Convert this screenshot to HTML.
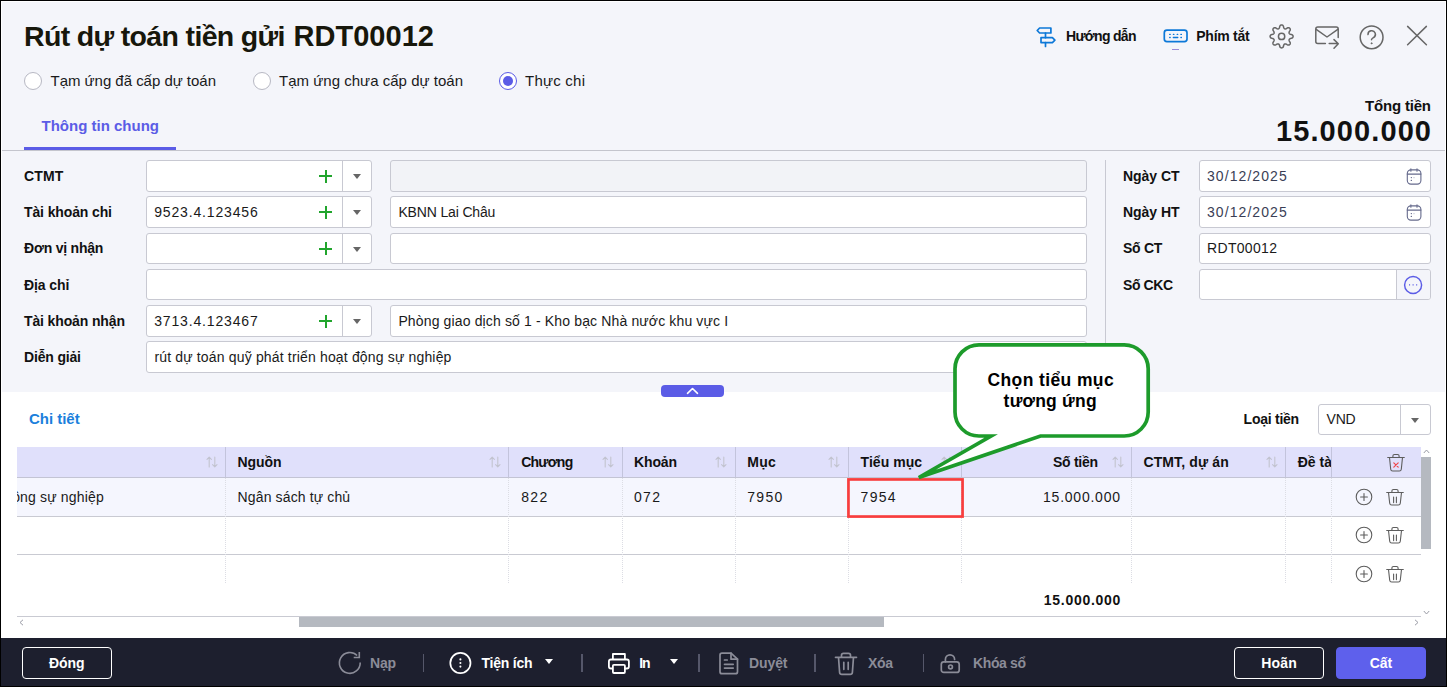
<!DOCTYPE html>
<html lang="vi">
<head>
<meta charset="utf-8">
<title>Rút dự toán tiền gửi RDT00012</title>
<style>
*{box-sizing:border-box;margin:0;padding:0}
html,body{width:1447px;height:687px;overflow:hidden;background:#f4f5fa}
body{font-family:"Liberation Sans",sans-serif;color:#111;position:relative;font-size:14px}
.a{position:absolute}
.t{position:absolute;white-space:nowrap;line-height:1em}
svg{position:absolute;overflow:visible}
#frame{position:absolute;left:0;top:0;width:1447px;height:687px;border:1px solid #000;z-index:50;pointer-events:none}
#frame2{position:absolute;left:1px;top:1px;width:1445px;height:637px;border:1px solid #fff;border-bottom:0;z-index:49;pointer-events:none}
.inp{position:absolute;background:#fff;border:1px solid #c8c9d2;border-radius:3px}
.dis{background:#f2f3f7}
.sep{position:absolute;width:1px;background:#c8c9d2}
.pl{position:absolute;width:13px;height:13px}
.pl:before{content:"";position:absolute;left:0;top:5.5px;width:13px;height:2px;background:#21a52d}
.pl:after{content:"";position:absolute;left:5.5px;top:0;width:2px;height:13px;background:#21a52d}
.car{position:absolute;width:0;height:0;border-left:4.5px solid transparent;border-right:4.5px solid transparent;border-top:5.5px solid #666}
.vl{position:absolute;width:0;border-left:1px dotted #dcdde4}
.hl{position:absolute;height:1px;background:#c9cad2}
.fsep{position:absolute;top:654px;width:1.5px;height:18px;background:#55576a}
</style>
</head>
<body>
<div id="frame"></div><div id="frame2"></div>

<div class="t" id="t1" style="top:22.17px;font-size:28.5px;color:#17170b;font-weight:bold;letter-spacing:-0.658px;left:24px;">Rút dự toán tiền gửi</div>
<div class="t" id="t2" style="top:21.75px;font-size:29px;color:#17170b;font-weight:bold;letter-spacing:0.036px;left:293.5px;">RDT00012</div>
<div class="t" id="t3" style="top:29.35px;font-size:14px;color:#111;font-weight:bold;letter-spacing:-0.699px;left:1066px;">Hướng dẫn</div>
<div class="a" style="left:1172px;top:49px;width:7px;height:1px;background:#9a8ad6"></div>
<div class="t" id="t4" style="top:29.35px;font-size:14px;color:#111;font-weight:bold;letter-spacing:-0.262px;left:1196.3px;">Phím tắt</div>
<div class="a" style="left:24px;top:72px;width:18px;height:18px;border-radius:50%;border:1px solid #b7b8c3;background:#fff"></div>
<div class="t" id="t5" style="top:72.70px;font-size:15px;color:#1a1a1a;letter-spacing:-0.025px;left:50.5px;">Tạm ứng đã cấp dự toán</div>
<div class="a" style="left:253px;top:72px;width:18px;height:18px;border-radius:50%;border:1px solid #b7b8c3;background:#fff"></div>
<div class="t" id="t6" style="top:72.70px;font-size:15px;color:#1a1a1a;letter-spacing:0.019px;left:279px;">Tạm ứng chưa cấp dự toán</div>
<div class="a" style="left:499px;top:72px;width:18px;height:18px;border-radius:50%;border:1px solid #5b5ce6;background:#fff"></div><div class="a" style="left:503px;top:76px;width:10px;height:10px;border-radius:50%;background:#5b5ce6"></div>
<div class="t" id="t7" style="top:72.70px;font-size:15px;color:#1a1a1a;letter-spacing:0.230px;left:525px;">Thực chi</div>
<div class="t" id="t8" style="top:117.60px;font-size:15px;color:#5b5ce6;font-weight:bold;letter-spacing:0.002px;left:41.5px;">Thông tin chung</div>
<div class="a" style="left:24px;top:147px;width:152px;height:3px;background:#5b5ce6"></div>
<div class="a" style="left:2px;top:150px;width:1443px;height:1px;background:#c4c5cd"></div>
<div class="t" id="t9" style="top:98.30px;font-size:15px;color:#111;font-weight:bold;letter-spacing:-0.188px;right:16.19px;">Tổng tiền</div>
<div class="t" id="t10" style="top:117.45px;font-size:29px;color:#111;font-weight:bold;letter-spacing:1.094px;right:14.91px;">15.000.000</div>
<div class="t" id="t11" style="top:169.15px;font-size:14px;color:#111;font-weight:bold;letter-spacing:0.136px;left:24px;">CTMT</div>
<div class="t" id="t12" style="top:205.45px;font-size:14px;color:#111;font-weight:bold;letter-spacing:-0.122px;left:24px;">Tài khoản chi</div>
<div class="t" id="t13" style="top:241.15px;font-size:14px;color:#111;font-weight:bold;letter-spacing:-0.212px;left:24px;">Đơn vị nhận</div>
<div class="t" id="t14" style="top:278.15px;font-size:14px;color:#111;font-weight:bold;letter-spacing:-0.101px;left:24px;">Địa chỉ</div>
<div class="t" id="t15" style="top:314.15px;font-size:14px;color:#111;font-weight:bold;letter-spacing:-0.130px;left:24px;">Tài khoản nhận</div>
<div class="t" id="t16" style="top:350.45px;font-size:14px;color:#111;font-weight:bold;letter-spacing:-0.170px;left:24px;">Diễn giải</div>
<div class="inp" style="left:146px;top:160px;width:226px;height:31.5px"></div>
<div class="sep" style="left:342px;top:161px;height:29.5px"></div>
<div class="pl" style="left:319px;top:169.5px"></div>
<div class="car" style="left:352.5px;top:174px"></div>
<div class="inp dis" style="left:390px;top:160px;width:697px;height:31.5px"></div>
<div class="inp" style="left:146px;top:196.25px;width:226px;height:31.5px"></div>
<div class="sep" style="left:342px;top:197.25px;height:29.5px"></div>
<div class="pl" style="left:319px;top:205.75px"></div>
<div class="car" style="left:352.5px;top:210.25px"></div>
<div class="t" id="t17" style="top:205.45px;font-size:14px;color:#1a1a1a;letter-spacing:0.839px;left:154.2px;">9523.4.123456</div>
<div class="inp" style="left:390px;top:196.25px;width:697px;height:31.5px"></div>
<div class="t" id="t18" style="top:205.45px;font-size:14px;color:#1a1a1a;letter-spacing:-0.152px;left:398.4px;">KBNN Lai Châu</div>
<div class="inp" style="left:146px;top:232.5px;width:226px;height:31.5px"></div>
<div class="sep" style="left:342px;top:233.5px;height:29.5px"></div>
<div class="pl" style="left:319px;top:242.0px"></div>
<div class="car" style="left:352.5px;top:246.5px"></div>
<div class="inp" style="left:390px;top:232.5px;width:697px;height:31.5px"></div>
<div class="inp" style="left:146px;top:268.75px;width:941px;height:31.5px"></div>
<div class="inp" style="left:146px;top:305px;width:226px;height:31.5px"></div>
<div class="sep" style="left:342px;top:306px;height:29.5px"></div>
<div class="pl" style="left:319px;top:314.5px"></div>
<div class="car" style="left:352.5px;top:319px"></div>
<div class="t" id="t19" style="top:314.15px;font-size:14px;color:#1a1a1a;letter-spacing:0.839px;left:154.2px;">3713.4.123467</div>
<div class="inp" style="left:390px;top:305px;width:697px;height:31.5px"></div>
<div class="t" id="t20" style="top:314.15px;font-size:14px;color:#1a1a1a;letter-spacing:0.142px;left:398.4px;">Phòng giao dịch số 1 - Kho bạc Nhà nước khu vực I</div>
<div class="inp" style="left:146px;top:341.25px;width:941px;height:31.5px"></div>
<div class="t" id="t21" style="top:350.45px;font-size:14px;color:#1a1a1a;letter-spacing:0.164px;left:154.4px;">rút dự toán quỹ phát triển hoạt động sự nghiệp</div>
<div class="a" style="left:1105px;top:160px;width:1px;height:213px;background:#c8c9d2"></div>
<div class="t" id="t22" style="top:169.15px;font-size:14px;color:#111;font-weight:bold;letter-spacing:-0.049px;left:1123px;">Ngày CT</div>
<div class="inp" style="left:1199px;top:160px;width:232px;height:31.5px"></div>
<div class="t" id="t23" style="top:205.45px;font-size:14px;color:#111;font-weight:bold;letter-spacing:-0.049px;left:1123px;">Ngày HT</div>
<div class="inp" style="left:1199px;top:196.25px;width:232px;height:31.5px"></div>
<div class="t" id="t24" style="top:241.15px;font-size:14px;color:#111;font-weight:bold;letter-spacing:-0.288px;left:1123px;">Số CT</div>
<div class="inp" style="left:1199px;top:232.5px;width:232px;height:31.5px"></div>
<div class="t" id="t25" style="top:278.15px;font-size:14px;color:#111;font-weight:bold;letter-spacing:-0.425px;left:1123px;">Số CKC</div>
<div class="inp" style="left:1199px;top:268.75px;width:232px;height:31.5px"></div>
<div class="t" id="t26" style="top:169.15px;font-size:14px;color:#3a3e55;letter-spacing:1.069px;left:1207px;">30/12/2025</div>
<svg style="left:1406px;top:167.8px" width="16" height="17" viewBox="0 0 16 17" fill="none" stroke="#656a8c" stroke-width="1.1" stroke-linecap="round"><rect x="1.3" y="1.900" width="13.6" height="14.2" rx="3.6"/><path d="M1.3 6.1H14.9M4.9 .8V3.300M11 .8V3.3" /><path d="M5.300 9.600H5.4M5.3 12.4H5.400" stroke-width="1.300"/><path d="M7.900 9.7H8.1" stroke-width="1" stroke="#a9acc2"/></svg>
<div class="t" id="t27" style="top:205.45px;font-size:14px;color:#3a3e55;letter-spacing:1.069px;left:1207px;">30/12/2025</div>
<svg style="left:1406px;top:204.05px" width="16" height="17" viewBox="0 0 16 17" fill="none" stroke="#656a8c" stroke-width="1.1" stroke-linecap="round"><rect x="1.3" y="1.900" width="13.6" height="14.2" rx="3.6"/><path d="M1.3 6.1H14.9M4.9 .8V3.300M11 .8V3.3" /><path d="M5.300 9.600H5.4M5.3 12.4H5.400" stroke-width="1.300"/><path d="M7.900 9.7H8.1" stroke-width="1" stroke="#a9acc2"/></svg>
<div class="t" id="t28" style="top:241.15px;font-size:14px;color:#1a1a1a;letter-spacing:0.328px;left:1207px;">RDT00012</div>
<div class="a" style="left:1397px;top:269.75px;width:33px;height:29.5px;background:#f4f5fa;border-radius:0 2px 2px 0"></div>
<div class="sep" style="left:1396px;top:269.75px;height:29.5px"></div>
<div class="a" style="left:2px;top:391.6px;width:1443px;height:246.4px;background:#fff"></div>
<div class="a" style="left:661px;top:385px;width:63px;height:12px;background:#5b5ce6;border-radius:4px"></div>
<svg style="left:686px;top:387px" width="13" height="8" viewBox="0 0 13 8" fill="none" stroke="#fff" stroke-width="1.6" stroke-linecap="round" stroke-linejoin="round"><path d="M1.5 6.3L6.5 1.5L11.5 6.3"/></svg>
<div class="t" id="t29" style="top:410.70px;font-size:15px;color:#1b7fdc;font-weight:bold;letter-spacing:-0.021px;left:29px;">Chi tiết</div>
<div class="t" id="t30" style="top:411.95px;font-size:14px;color:#111;font-weight:bold;letter-spacing:-0.258px;left:1243.6px;">Loại tiền</div>
<div class="inp" style="left:1318px;top:404px;width:113px;height:31px"></div>
<div class="sep" style="left:1400px;top:405px;height:29px"></div>
<div class="car" style="left:1410.5px;top:418px"></div>
<div class="t" id="t31" style="top:411.95px;font-size:14px;color:#1a1a1a;letter-spacing:-0.281px;left:1326.6px;">VND</div>
<div class="a" style="left:17px;top:447px;width:1404px;height:30.5px;background:#e0e0fb"></div>
<div class="a" style="left:17px;top:478px;width:1404px;height:38px;background:#f5f6fe"></div>
<div class="hl" style="left:17px;top:477px;width:1404px;background:#c3c4d4"></div>
<div class="hl" style="left:17px;top:516px;width:1404px"></div>
<div class="hl" style="left:17px;top:554px;width:1404px"></div>
<div class="hl" style="left:17px;top:616px;width:1404px"></div>
<div class="a" style="left:225px;top:447px;width:1px;height:30px;background:#c3c4dc"></div>
<div class="vl" style="left:225px;top:478px;height:105px"></div>
<div class="a" style="left:508px;top:447px;width:1px;height:30px;background:#c3c4dc"></div>
<div class="vl" style="left:508px;top:478px;height:105px"></div>
<div class="a" style="left:622px;top:447px;width:1px;height:30px;background:#c3c4dc"></div>
<div class="vl" style="left:622px;top:478px;height:105px"></div>
<div class="a" style="left:735px;top:447px;width:1px;height:30px;background:#c3c4dc"></div>
<div class="vl" style="left:735px;top:478px;height:105px"></div>
<div class="a" style="left:848px;top:447px;width:1px;height:30px;background:#c3c4dc"></div>
<div class="vl" style="left:848px;top:478px;height:105px"></div>
<div class="a" style="left:961px;top:447px;width:1px;height:30px;background:#c3c4dc"></div>
<div class="vl" style="left:961px;top:478px;height:105px"></div>
<div class="a" style="left:1131px;top:447px;width:1px;height:30px;background:#c3c4dc"></div>
<div class="vl" style="left:1131px;top:478px;height:105px"></div>
<div class="a" style="left:1285px;top:447px;width:1px;height:30px;background:#c3c4dc"></div>
<div class="vl" style="left:1285px;top:478px;height:105px"></div>
<div class="a" style="left:1331px;top:447px;width:1px;height:30px;background:#c3c4dc"></div>
<div class="vl" style="left:1331px;top:478px;height:105px"></div>
<svg style="left:205.5px;top:456px" width="12" height="12" viewBox="0 0 12 12" fill="none" stroke="#c2c3cf" stroke-width="1.1" stroke-linecap="round" stroke-linejoin="round"><path d="M3.2 11V1.2M1 3.4L3.2 1.2L5.4 3.4M8.8 1V10.8M6.6 8.6L8.8 10.8L11 8.6"/></svg>
<svg style="left:488.5px;top:456px" width="12" height="12" viewBox="0 0 12 12" fill="none" stroke="#c2c3cf" stroke-width="1.1" stroke-linecap="round" stroke-linejoin="round"><path d="M3.2 11V1.2M1 3.4L3.2 1.2L5.4 3.4M8.8 1V10.8M6.6 8.6L8.8 10.8L11 8.6"/></svg>
<svg style="left:601.5px;top:456px" width="12" height="12" viewBox="0 0 12 12" fill="none" stroke="#c2c3cf" stroke-width="1.1" stroke-linecap="round" stroke-linejoin="round"><path d="M3.2 11V1.2M1 3.4L3.2 1.2L5.4 3.4M8.8 1V10.8M6.6 8.6L8.8 10.8L11 8.6"/></svg>
<svg style="left:714.5px;top:456px" width="12" height="12" viewBox="0 0 12 12" fill="none" stroke="#c2c3cf" stroke-width="1.1" stroke-linecap="round" stroke-linejoin="round"><path d="M3.2 11V1.2M1 3.4L3.2 1.2L5.4 3.4M8.8 1V10.8M6.6 8.6L8.8 10.8L11 8.6"/></svg>
<svg style="left:828px;top:456px" width="12" height="12" viewBox="0 0 12 12" fill="none" stroke="#c2c3cf" stroke-width="1.1" stroke-linecap="round" stroke-linejoin="round"><path d="M3.2 11V1.2M1 3.4L3.2 1.2L5.4 3.4M8.8 1V10.8M6.6 8.6L8.8 10.8L11 8.6"/></svg>
<svg style="left:941px;top:456px" width="12" height="12" viewBox="0 0 12 12" fill="none" stroke="#c2c3cf" stroke-width="1.1" stroke-linecap="round" stroke-linejoin="round"><path d="M3.2 11V1.2M1 3.4L3.2 1.2L5.4 3.4M8.8 1V10.8M6.6 8.6L8.8 10.8L11 8.6"/></svg>
<svg style="left:1111.7px;top:456px" width="12" height="12" viewBox="0 0 12 12" fill="none" stroke="#c2c3cf" stroke-width="1.1" stroke-linecap="round" stroke-linejoin="round"><path d="M3.2 11V1.2M1 3.4L3.2 1.2L5.4 3.4M8.8 1V10.8M6.6 8.6L8.8 10.8L11 8.6"/></svg>
<svg style="left:1265.5px;top:456px" width="12" height="12" viewBox="0 0 12 12" fill="none" stroke="#c2c3cf" stroke-width="1.1" stroke-linecap="round" stroke-linejoin="round"><path d="M3.2 11V1.2M1 3.4L3.2 1.2L5.4 3.4M8.8 1V10.8M6.6 8.6L8.8 10.8L11 8.6"/></svg>
<div class="t" id="t32" style="top:455.15px;font-size:14px;color:#111;font-weight:bold;letter-spacing:-0.082px;left:237.6px;">Nguồn</div>
<div class="t" id="t33" style="top:455.15px;font-size:14px;color:#111;font-weight:bold;letter-spacing:-0.772px;left:521.2px;">Chương</div>
<div class="t" id="t34" style="top:455.15px;font-size:14px;color:#111;font-weight:bold;letter-spacing:-0.141px;left:634px;">Khoản</div>
<div class="t" id="t35" style="top:455.15px;font-size:14px;color:#111;font-weight:bold;letter-spacing:0.250px;left:747.3px;">Mục</div>
<div class="t" id="t36" style="top:455.15px;font-size:14px;color:#111;font-weight:bold;letter-spacing:0.042px;left:860.6px;">Tiểu mục</div>
<div class="t" id="t37" style="top:455.15px;font-size:14px;color:#111;font-weight:bold;letter-spacing:-0.279px;right:349.28px;">Số tiền</div>
<div class="t" id="t38" style="top:455.15px;font-size:14px;color:#111;font-weight:bold;letter-spacing:0.127px;left:1143.4px;">CTMT, dự án</div>
<div class="a" style="left:1297px;top:450px;width:34px;height:26px;overflow:hidden"><div class="t" id="t39" style="top:5.15px;font-size:14px;color:#111;font-weight:bold;left:0.7px;">Đề tài</div></div>
<div class="a" style="left:17px;top:480px;width:100px;height:34px;overflow:hidden"><div class="t" id="t40" style="top:9.65px;font-size:14px;color:#1a1a1a;letter-spacing:0.168px;left:-44.8px;">hoạt động sự nghiệp</div></div>
<div class="t" id="t41" style="top:489.65px;font-size:14px;color:#1a1a1a;letter-spacing:0.130px;left:237.6px;">Ngân sách tự chủ</div>
<div class="t" id="t42" style="top:489.65px;font-size:14px;color:#1a1a1a;letter-spacing:1.320px;left:521.2px;">822</div>
<div class="t" id="t43" style="top:489.65px;font-size:14px;color:#1a1a1a;letter-spacing:1.320px;left:634px;">072</div>
<div class="t" id="t44" style="top:489.65px;font-size:14px;color:#1a1a1a;letter-spacing:1.281px;left:747.3px;">7950</div>
<div class="t" id="t45" style="top:489.65px;font-size:14px;color:#1a1a1a;letter-spacing:1.281px;left:860.6px;">7954</div>
<div class="t" id="t46" style="top:489.65px;font-size:14px;color:#1a1a1a;letter-spacing:0.769px;right:326.23px;">15.000.000</div>
<svg style="left:1355px;top:488.2px" width="18" height="18" viewBox="0 0 18 18" fill="none" stroke="#5d5d5d" stroke-width="1.1" stroke-linecap="round"><circle cx="9" cy="9" r="7.8"/><path d="M9 5.6V12.4M5.6 9H12.4"/></svg>
<svg style="left:1386.2px;top:488.0px" width="18" height="19" viewBox="0 0 18 19" fill="none" stroke="#5d5d5d" stroke-width="1.1" stroke-linecap="round" stroke-linejoin="round"><path d="M.7 4.5H17.3M5.9 4.5V3Q5.9 1.5 7.4 1.5H10.6Q12.100 1.5 12.1 3V4.500M2.5 4.5L3.7 15.2Q3.900 17 5.7 17H12.3Q14.1 17 14.3 15.2L15.5 4.5"/><path d="M7.6 9V14.6M10.4 9V14.6"/></svg>
<svg style="left:1355px;top:526.2px" width="18" height="18" viewBox="0 0 18 18" fill="none" stroke="#5d5d5d" stroke-width="1.1" stroke-linecap="round"><circle cx="9" cy="9" r="7.8"/><path d="M9 5.6V12.4M5.6 9H12.4"/></svg>
<svg style="left:1386.2px;top:526.0px" width="18" height="19" viewBox="0 0 18 19" fill="none" stroke="#5d5d5d" stroke-width="1.1" stroke-linecap="round" stroke-linejoin="round"><path d="M.7 4.5H17.3M5.9 4.5V3Q5.9 1.5 7.4 1.5H10.6Q12.100 1.5 12.1 3V4.500M2.5 4.5L3.7 15.2Q3.900 17 5.7 17H12.3Q14.1 17 14.3 15.2L15.5 4.5"/><path d="M7.6 9V14.6M10.4 9V14.6"/></svg>
<svg style="left:1355px;top:565px" width="18" height="18" viewBox="0 0 18 18" fill="none" stroke="#5d5d5d" stroke-width="1.1" stroke-linecap="round"><circle cx="9" cy="9" r="7.8"/><path d="M9 5.6V12.4M5.6 9H12.4"/></svg>
<svg style="left:1386.2px;top:564.8px" width="18" height="19" viewBox="0 0 18 19" fill="none" stroke="#5d5d5d" stroke-width="1.1" stroke-linecap="round" stroke-linejoin="round"><path d="M.7 4.5H17.3M5.9 4.5V3Q5.9 1.5 7.4 1.5H10.6Q12.100 1.5 12.1 3V4.500M2.5 4.5L3.7 15.2Q3.900 17 5.7 17H12.3Q14.1 17 14.3 15.2L15.5 4.5"/><path d="M7.6 9V14.6M10.4 9V14.6"/></svg>
<svg style="left:1387.2px;top:452.5px" width="18" height="19" viewBox="0 0 18 19" fill="none" stroke="#5d5d5d" stroke-width="1.1" stroke-linecap="round" stroke-linejoin="round"><path d="M.7 4.5H17.3M5.9 4.5V3Q5.9 1.5 7.4 1.5H10.6Q12.100 1.5 12.1 3V4.500M2.5 4.5L3.7 16.2Q3.900 18 5.7 18H12.3Q14.1 18 14.3 16.2L15.5 4.5"/><path d="M6.800 9.8L11.2 14.2M11.2 9.8L6.8 14.2" stroke="#f0474b" stroke-width="1.2"/></svg>
<div class="a" style="left:17px;top:583.5px;width:1404px;height:32.5px;background:#fff"></div>
<div class="t" id="t47" style="top:593.15px;font-size:14px;color:#111;font-weight:bold;letter-spacing:0.725px;right:325.87px;">15.000.000</div>
<div class="a" style="left:1421px;top:447px;width:10px;height:170px;background:#fff"></div>
<div class="a" style="left:1421px;top:457px;width:10px;height:91.5px;background:#b5b9c0"></div>
<svg style="left:1422.5px;top:448.7px" width="7" height="5" viewBox="0 0 7 5" fill="none" stroke="#9a9ca6" stroke-width="1"><path d="M.8 4L3.5 1L6.2 4"/></svg>
<svg style="left:1422.5px;top:609.5px" width="7" height="5" viewBox="0 0 7 5" fill="none" stroke="#9a9ca6" stroke-width="1"><path d="M.8 1L3.5 4L6.2 1"/></svg>
<div class="a" style="left:299px;top:617px;width:585px;height:10px;background:#b5b9c0"></div>
<svg style="left:19px;top:618.5px" width="5" height="7" viewBox="0 0 5 7" fill="none" stroke="#9a9ca6" stroke-width="1"><path d="M4 .8L1 3.5L4 6.2"/></svg>
<svg style="left:1413.5px;top:618.5px" width="5" height="7" viewBox="0 0 5 7" fill="none" stroke="#9a9ca6" stroke-width="1"><path d="M1 .8L4 3.5L1 6.2"/></svg>
<svg style="left:0;top:0" width="1447" height="687" viewBox="0 0 1447 687"><rect x="848.45" y="479.45" width="114.1" height="37.1" fill="none" stroke="#f83d3d" stroke-width="2.7"/><path d="M979 344.8H1124.2A24 24 0 0 1 1148.2 368.8V412A24 24 0 0 1 1124.2 436H1040.5L918.8 477.5L991 436H979A24 24 0 0 1 955 412V368.800A24 24 0 0 1 979 344.8Z" fill="#fff" stroke="#1d9b2b" stroke-width="3.7" stroke-linejoin="miter" stroke-miterlimit="10"/></svg>
<div class="t" id="t48" style="top:372.39px;font-size:17.5px;color:#000;font-weight:bold;letter-spacing:0.381px;left:850.5999999999999px;width:400px;text-align:center;padding-left:0.381px;">Chọn tiểu mục</div>
<div class="t" id="t49" style="top:393.19px;font-size:17.5px;color:#000;font-weight:bold;letter-spacing:0.221px;left:850.0999999999999px;width:400px;text-align:center;padding-left:0.221px;">tương ứng</div>
<div class="a" style="left:0;top:638px;width:1447px;height:49px;background:#1d1f2e"></div>
<div class="a" style="left:22px;top:647px;width:89.5px;height:31.5px;border-radius:4px;border:1px solid #fff;"></div>
<div class="t" id="t50" style="top:656.15px;font-size:14px;color:#fff;font-weight:bold;letter-spacing:-0.089px;left:-133.3px;width:400px;text-align:center;padding-left:-0.089px;">Đóng</div>
<div class="a" style="left:1234px;top:647px;width:90px;height:31.5px;border-radius:4px;border:1px solid #fff;"></div>
<div class="t" id="t51" style="top:656.15px;font-size:14px;color:#fff;font-weight:bold;letter-spacing:0.167px;left:1079px;width:400px;text-align:center;padding-left:0.167px;">Hoãn</div>
<div class="a" style="left:1336px;top:647px;width:90px;height:31.5px;border-radius:4px;background:#5e60ec;border:1px solid #5e60ec;"></div>
<div class="t" id="t52" style="top:656.15px;font-size:14px;color:#fff;font-weight:bold;letter-spacing:-0.031px;left:1181px;width:400px;text-align:center;padding-left:-0.031px;">Cất</div>
<div class="t" id="t53" style="top:656.15px;font-size:14px;color:#8b8c98;font-weight:bold;letter-spacing:-0.227px;left:370px;">Nạp</div>
<div class="t" id="t54" style="top:656.15px;font-size:14px;color:#fff;font-weight:bold;letter-spacing:-0.237px;left:481.5px;">Tiện ích</div>
<div class="car" style="left:544.500px;top:659.4px;border-top-color:#fff"></div>
<div class="t" id="t55" style="top:656.15px;font-size:14px;color:#fff;font-weight:bold;letter-spacing:-0.953px;left:639.2px;">In</div>
<div class="car" style="left:669.500px;top:659.4px;border-top-color:#fff"></div>
<div class="t" id="t56" style="top:656.15px;font-size:14px;color:#8b8c98;font-weight:bold;letter-spacing:-0.102px;left:749px;">Duyệt</div>
<div class="t" id="t57" style="top:656.15px;font-size:14px;color:#8b8c98;font-weight:bold;letter-spacing:-0.344px;left:868px;">Xóa</div>
<div class="t" id="t58" style="top:656.15px;font-size:14px;color:#8b8c98;font-weight:bold;letter-spacing:-0.372px;left:973px;">Khóa sổ</div>
<div class="fsep" style="left:422.8px"></div>
<div class="fsep" style="left:581px"></div>
<div class="fsep" style="left:698px"></div>
<div class="fsep" style="left:814px"></div>
<div class="fsep" style="left:922.5px"></div>
<svg style="left:0;top:0;z-index:40" width="1447" height="687" viewBox="0 0 1447 687"><g fill="none" stroke="#0c78d8" stroke-width="1.7" stroke-linejoin="round" stroke-linecap="round"><path d="M1039.6 28H1050.9V33H1039.6L1037.2 30.5Z"/><path d="M1041 37.7H1052.4L1054.9 40.15L1052.4 42.6H1041Z"/><path d="M1045.5 33V37.7M1045.5 42.6V46.5"/></g>
<g fill="none" stroke="#0c78d8" stroke-width="1.7" stroke-linecap="round"><rect x="1164.3" y="30.05" width="22.7" height="11.6" rx="2.6"/><path d="M1169.7 34.4H1170.2M1173.4 34.4H1173.9M1177.2 34.4H1177.7M1180.9 34.4H1181.4M1169.7 37.5H1170.2M1173.3 37.5H1177.8M1180.9 37.5H1181.4" stroke-width="1.3"/></g>
<path d="M1281.60 24.90L1282.05 24.96L1282.49 25.13L1282.90 25.43L1283.27 25.87L1283.52 26.74L1283.71 27.62L1283.95 28.07L1284.19 28.41L1284.46 28.66L1284.74 28.82L1285.05 28.91L1285.41 28.92L1285.83 28.85L1286.32 28.70L1287.07 28.21L1287.87 27.77L1288.44 27.72L1288.94 27.81L1289.37 27.99L1289.73 28.27L1290.01 28.63L1290.19 29.06L1290.28 29.56L1290.23 30.13L1289.79 30.93L1289.30 31.68L1289.15 32.17L1289.08 32.59L1289.09 32.95L1289.18 33.26L1289.34 33.54L1289.59 33.81L1289.93 34.05L1290.38 34.29L1291.26 34.48L1292.13 34.73L1292.57 35.10L1292.87 35.51L1293.04 35.95L1293.10 36.40L1293.04 36.85L1292.87 37.29L1292.57 37.70L1292.13 38.07L1291.26 38.32L1290.38 38.51L1289.93 38.75L1289.59 38.99L1289.34 39.26L1289.18 39.54L1289.09 39.85L1289.08 40.21L1289.15 40.63L1289.30 41.12L1289.79 41.87L1290.23 42.67L1290.28 43.24L1290.19 43.74L1290.01 44.17L1289.73 44.53L1289.37 44.81L1288.94 44.99L1288.44 45.08L1287.87 45.03L1287.07 44.59L1286.32 44.10L1285.83 43.95L1285.41 43.88L1285.05 43.89L1284.74 43.98L1284.46 44.14L1284.19 44.39L1283.95 44.73L1283.71 45.18L1283.52 46.06L1283.27 46.93L1282.90 47.37L1282.49 47.67L1282.05 47.84L1281.60 47.90L1281.15 47.84L1280.71 47.67L1280.30 47.37L1279.93 46.93L1279.68 46.06L1279.49 45.18L1279.25 44.73L1279.01 44.39L1278.74 44.14L1278.46 43.98L1278.15 43.89L1277.79 43.88L1277.37 43.95L1276.88 44.10L1276.13 44.59L1275.33 45.03L1274.76 45.08L1274.26 44.99L1273.83 44.81L1273.47 44.53L1273.19 44.17L1273.01 43.74L1272.92 43.24L1272.97 42.67L1273.41 41.87L1273.90 41.12L1274.05 40.63L1274.12 40.21L1274.11 39.85L1274.02 39.54L1273.86 39.26L1273.61 38.99L1273.27 38.75L1272.82 38.51L1271.94 38.32L1271.07 38.07L1270.63 37.70L1270.33 37.29L1270.16 36.85L1270.10 36.40L1270.16 35.95L1270.33 35.51L1270.63 35.10L1271.07 34.73L1271.94 34.48L1272.82 34.29L1273.27 34.05L1273.61 33.81L1273.86 33.54L1274.02 33.26L1274.11 32.95L1274.12 32.59L1274.05 32.17L1273.90 31.68L1273.41 30.93L1272.97 30.13L1272.92 29.56L1273.01 29.06L1273.19 28.63L1273.47 28.27L1273.83 27.99L1274.26 27.81L1274.76 27.72L1275.33 27.77L1276.13 28.21L1276.88 28.70L1277.37 28.85L1277.79 28.92L1278.15 28.91L1278.46 28.82L1278.74 28.66L1279.01 28.41L1279.25 28.07L1279.49 27.62L1279.68 26.74L1279.93 25.87L1280.30 25.43L1280.71 25.13L1281.15 24.96Z" fill="none" stroke="#666" stroke-width="1.5" stroke-linejoin="round"/><circle cx="1281.6" cy="36.4" r="3.15" fill="none" stroke="#666" stroke-width="1.5"/>
<g fill="none" stroke="#666" stroke-width="1.5" stroke-linejoin="round" stroke-linecap="round"><path d="M1325.4 43.6H1317.8Q1315.8 43.6 1315.8 41.6V28.9Q1315.8 26.9 1317.8 26.9H1336.2Q1338.2 26.9 1338.2 28.9V37.4"/><path d="M1316.2 29.4L1327 37L1337.8 29.4"/><path d="M1329.2 43.6H1338M1334 39.6L1338.3 43.7L1334 48.2"/></g>
<g fill="none" stroke="#666" stroke-width="1.5" stroke-linecap="round"><circle cx="1371.6" cy="37.3" r="11.4"/><path d="M1368 34.6A3.7 3.7 0 1 1 1373.6 37.6C1372.2 38.5 1371.5 38.9 1371.5 39.8"/><circle cx="1371.5" cy="43.3" r=".55" fill="#666" stroke-width=".8"/></g>
<path d="M1407.6 26.4L1426.4 44.8M1426.4 26.4L1407.6 44.8" fill="none" stroke="#666" stroke-width="1.5" stroke-linecap="round"/>
<g fill="none" stroke="#5b5ce6" stroke-width="1.45"><circle cx="1413.1" cy="284.9" r="8.5"/><path d="M1409 284.9H1410.1M1412.550 284.9H1413.65M1416.1 284.900H1417.2" stroke-width="1.2"/></g>
<g fill="none" stroke="#8b8c98" stroke-width="1.6" stroke-linecap="butt" stroke-linejoin="miter"><path d="M360.2 662.600A10.4 10.4 0 1 1 357.1 655.5"/><path d="M359.3 651.9V657.500H353.7"/></g>
<g fill="none" stroke="#fff" stroke-width="1.7"><circle cx="460.4" cy="663" r="10.1"/><g fill="#fff" stroke="none"><circle cx="460.4" cy="659.4" r="1.05"/><circle cx="460.4" cy="663" r="1.05"/><circle cx="460.4" cy="666.6" r="1.05"/></g></g>
<g fill="none" stroke="#fff" stroke-width="1.8" stroke-linejoin="round" transform="translate(607.4,652)"><path d="M5.5 7.5V2H17.5V7.5"/><path d="M5.5 16.5H3.5Q1.5 16.5 1.5 14.5V9.5Q1.5 7.5 3.5 7.5H19.5Q21.5 7.5 21.5 9.5V14.5Q21.5 16.5 19.5 16.5H17.5"/><rect x="5.5" y="12.8" width="12" height="8.2" rx="1"/></g>
<g fill="none" stroke="#8b8c98" stroke-width="1.7" stroke-linejoin="round" stroke-linecap="round" transform="translate(718,651)"><path d="M13 2.2H4Q2 2.2 2 4.2V20.7Q2 22.7 4 22.7H17.5Q19.5 22.7 19.5 20.7V8.200Z"/><path d="M13 2.2V8.2H19.5M6.500 9H9.2M6.5 13.3H15.2M6.5 17.100H15.2"/></g>
<g fill="none" stroke="#8b8c98" stroke-width="1.7" stroke-linejoin="round" stroke-linecap="round" transform="translate(834,651.300)"><path d="M1.5 6H22.5M7.5 6V4Q7.5 2 9.5 2H14.5Q16.5 2 16.5 4V6M4.5 6L5.6 21Q5.8 23 7.8 23H16.2Q18.2 23 18.4 21L19.5 6"/><path d="M9.800 11V18M14.2 11V18"/></g>
<g fill="none" stroke="#8b8c98" stroke-width="1.7" stroke-linejoin="round" stroke-linecap="round" transform="translate(940,651)"><rect x="1.300" y="10.8" width="17.9" height="10.6" rx="2.5"/><path d="M5.4 10.8V8.4A4.600 4.6 0 0 1 14.6 8.400"/><circle cx="10.5" cy="15.9" r="1.9"/></g></svg>
</body>
</html>
